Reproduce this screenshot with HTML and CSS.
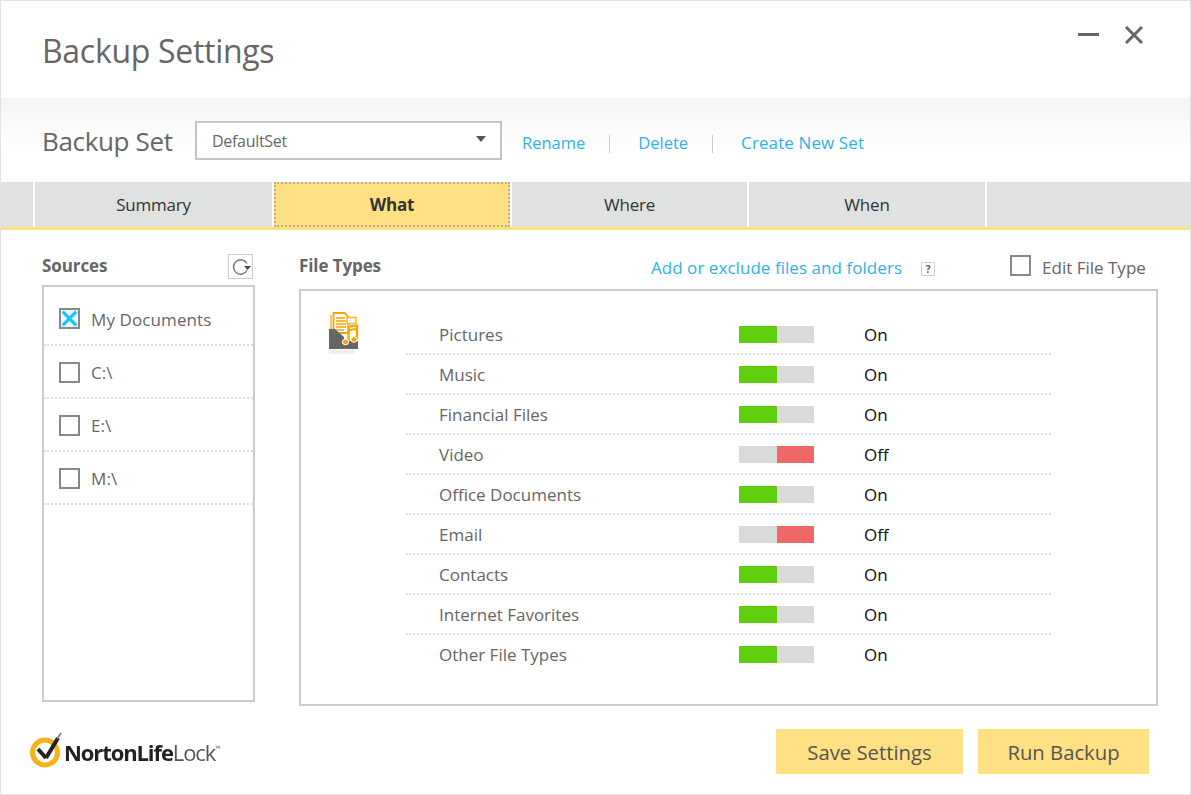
FILE: index.html
```html
<!DOCTYPE html>
<html lang="en">
<head>
  <meta charset="UTF-8" />
  <title>Backup Settings</title>
  <link rel="stylesheet" href="styles.css">
</head>
<body>

  <div class="window">

    <div class="title-bar">
      <h1 class="title">Backup Settings</h1>
      <div class="window-buttons">
        <svg class="win-icon" width="24" height="24" viewBox="0 0 24 24"><path d="M1 11.5h21" stroke="#666" stroke-width="3"/></svg>
        <svg class="win-icon" width="24" height="24" viewBox="0 0 24 24"><path d="M4 4l16 16M20 4L4 20" stroke="#666" stroke-width="3"/></svg>
      </div>
    </div>

    <div class="set-bar">
      <span class="set-label">Backup Set</span>
      <div class="set-select">
        <span>DefaultSet</span>
        <span class="select-arrow"></span>
      </div>
      <a class="link set-link" href="#">Rename</a>
      <span class="set-sep"></span>
      <a class="link set-link" href="#">Delete</a>
      <span class="set-sep"></span>
      <a class="link set-link set-link-new" href="#">Create New Set</a>
    </div>

    <div class="tabs">
      <div class="tab">Summary</div>
      <div class="tab tab-active">What</div>
      <div class="tab">Where</div>
      <div class="tab">When</div>
    </div>

    <div class="content">

      <div class="sources">
        <div class="sources-head">
          <span class="heading">Sources</span>
          <span class="refresh-btn">
            <svg width="22" height="22" viewBox="0 0 22 22"><path d="M17 14.500a7.200 7.200 0 1 1 0-7" fill="none" stroke="#777" stroke-width="1.500"/><path d="M14 10h7l-3.500 4z" fill="#444"/></svg>
          </span>
        </div>
        <div class="source-list">
          <div class="source-row"><span class="check check-on">
            <svg width="20" height="20" viewBox="0 0 20 20"><path d="M2 2l16 16M18 2L2 18" stroke="#1cc3f5" stroke-width="3.600"/></svg>
          </span>My Documents</div>
          <div class="source-row"><span class="check"></span>C:\</div>
          <div class="source-row"><span class="check"></span>E:\</div>
          <div class="source-row"><span class="check"></span>M:\</div>
        </div>
      </div>

      <div class="types">
        <div class="types-head">
          <span class="heading">File Types</span>
          <a class="link add-link" href="#">Add or exclude files and folders</a>
          <span class="help">?</span>
          <span class="check edit-check"></span>
          <span class="edit-label">Edit File Type</span>
        </div>
        <div class="types-box">
          <div class="type-icon">
            <svg width="30" height="44" viewBox="0 0 30 44">
              <path d="M2 3v18" stroke="#f9b233" stroke-width="1.500" fill="none"/>
              <path d="M4.500 1h11l4 4v16h-15z" fill="#fff" stroke="#f7a600" stroke-width="1.800"/>
              <path d="M7 6h9M7 9h10M7 12h10M7 15h10M7 18h8" stroke="#f7a600" stroke-width="1.300"/>
              <path d="M18 5.500h9v6h-9z" fill="#fff" stroke="#f9b233" stroke-width="1.500"/>
              <path d="M0 17h6l9 8v12H0z" fill="#666"/>
              <path d="M15 25h14v12H15z" fill="#666"/>
              <path d="M19 13h11v16H19z" fill="#fff"/>
              <path d="M15 25l4-2v8h-4z" fill="#fff"/>
              <path d="M19.500 29V14.500l8.500-1V27" fill="none" stroke="#f7a600" stroke-width="2.400"/>
              <path d="M20 18l8-1" stroke="#f7a600" stroke-width="2"/>
              <ellipse cx="16.500" cy="30" rx="3.200" ry="2.800" fill="#f7a600" stroke="#fff"/>
              <ellipse cx="25" cy="27.500" rx="3.200" ry="2.800" fill="#f7a600" stroke="#fff"/>
              <path d="M0 38h26v4H0z" fill="#eee"/>
            </svg>
          </div>
          <div class="type-list">
            <div class="type-row"><span class="type-name">Pictures</span><span class="switch"><i class="on"></i><i></i></span><span class="state">On</span></div>
            <div class="type-row"><span class="type-name">Music</span><span class="switch"><i class="on"></i><i></i></span><span class="state">On</span></div>
            <div class="type-row"><span class="type-name">Financial Files</span><span class="switch"><i class="on"></i><i></i></span><span class="state">On</span></div>
            <div class="type-row"><span class="type-name">Video</span><span class="switch"><i></i><i class="off"></i></span><span class="state">Off</span></div>
            <div class="type-row"><span class="type-name">Office Documents</span><span class="switch"><i class="on"></i><i></i></span><span class="state">On</span></div>
            <div class="type-row"><span class="type-name">Email</span><span class="switch"><i></i><i class="off"></i></span><span class="state">Off</span></div>
            <div class="type-row"><span class="type-name">Contacts</span><span class="switch"><i class="on"></i><i></i></span><span class="state">On</span></div>
            <div class="type-row"><span class="type-name">Internet Favorites</span><span class="switch"><i class="on"></i><i></i></span><span class="state">On</span></div>
            <div class="type-row type-last"><span class="type-name">Other File Types</span><span class="switch"><i class="on"></i><i></i></span><span class="state">On</span></div>
          </div>
        </div>
      </div>

    </div>

    <div class="footer">
      <div class="logo">
        <svg class="logo-mark" width="36" height="40" viewBox="0 0 36 40">
          <circle cx="16" cy="24.500" r="12.500" fill="none" stroke="#f5b21a" stroke-width="5"/>
          <path d="M9 21l8 9" fill="none" stroke="#222" stroke-width="4"/>
          <path d="M17 30L29 10" fill="none" stroke="#222" stroke-width="4"/>
          <path d="M28 11l4-6" fill="none" stroke="#777" stroke-width="1.500"/>
        </svg>
        <span class="logo-text"><b>NortonLife</b>Lock<sup>™</sup></span>
      </div>
      <div class="footer-buttons">
        <button class="btn btn-save">Save Settings</button>
        <button class="btn btn-run">Run Backup</button>
      </div>
    </div>

  </div>

</body>
</html>
```

FILE: styles.css
```css
html, body {
  margin: 0;
  padding: 0;
  background: #fff;
  font-family: "Open Sans", "Noto Sans", sans-serif;
}

.window {
  box-sizing: border-box;
  width: 1191px;
  height: 795px;
  border: 1px solid #e2e2e2;
  background: #fff;
  overflow: hidden;
}

.title-bar {
  height: 97px;
  display: flex;
  justify-content: space-between;
  padding: 0 44px 0 41px;
}
.title {
  margin: 30px 0 0;
  font-size: 32px;
  line-height: 40px;
  font-weight: 400;
  color: #666;
  letter-spacing: -0.3px;
}
.window-buttons {
  display: flex;
  gap: 21px;
  padding-top: 22px;
  height: 24px;
}

.set-bar {
  height: 84px;
  box-sizing: border-box;
  padding: 23px 0 0 41px;
  display: flex;
  align-items: flex-start;
  background: linear-gradient(to bottom, #f5f5f5, #fff 65%);
}
.set-label {
  font-size: 26px;
  line-height: 40px;
  width: 153px;
  color: #666;
  letter-spacing: -0.35px;
}
.set-select {
  box-sizing: border-box;
  width: 307px;
  height: 39px;
  border: 2px solid #c4c4c4;
  background: #fff;
  display: flex;
  align-items: center;
  justify-content: space-between;
  padding: 0 14px 0 15px;
  font-size: 16px;
  color: #666;
  letter-spacing: -0.3px;
}
.select-arrow {
  width: 0;
  height: 0;
  margin-bottom: 4px;
  border-left: 5px solid transparent;
  border-right: 5px solid transparent;
  border-top: 6px solid #555;
}
.link {
  color: #2fb2ea;
  text-decoration: none;
}
.set-link {
  margin-top: 2px;
  font-size: 16.500px;
  line-height: 40px;
}
.set-link-new {
  font-size: 17px;
  letter-spacing: 0.1px;
}
.set-bar .set-link:first-of-type {
  margin-left: 20px;
}
.set-sep {
  width: 1px;
  height: 18px;
  margin: 14px 28px 0 24px;
  background: #ccc;
}

.tabs {
  height: 45px;
  display: flex;
  gap: 2px;
  padding-left: 32px;
  background: #e0e2e1;
  border-bottom: 3px solid #ffe082;
}
.tabs::before,
.tab {
  box-shadow: -2px 0 0 #fff;
}
.tabs::before {
  content: "";
  width: 0;
}
.tabs::after {
  content: "";
  width: 2px;
  margin-left: -2px;
  background: #fff;
}
.tab {
  box-sizing: border-box;
  width: 236px;
  display: flex;
  align-items: center;
  justify-content: center;
  font-size: 17px;
  color: #333;
  letter-spacing: -0.2px;
}
.tab:first-child {
  width: 237px;
}
.tab:nth-child(3) {
  width: 235px;
}
.tab-active {
  background: #ffe082;
  border: 2px dotted #b9ae88;
  font-weight: 700;
}

.content {
  display: flex;
  padding: 23px 32px 0 41px;
  gap: 44px;
}
.heading {
  margin-top: 1px;
  font-size: 17px;
  font-weight: 700;
  color: #666;
  letter-spacing: -0.1px;
}
.sources {
  width: 213px;
}
.sources-head {
  height: 32px;
  display: flex;
  align-items: flex-start;
  justify-content: space-between;
  padding-right: 2px;
}
.refresh-btn {
  box-sizing: border-box;
  width: 25px;
  height: 25px;
  margin-top: 1px;
  border: 1px solid #ccc;
  display: flex;
  align-items: center;
  justify-content: center;
}
.source-list {
  box-sizing: border-box;
  height: 417px;
  border: 2px solid #ccc;
}
.source-row {
  box-sizing: border-box;
  height: 53px;
  display: flex;
  align-items: center;
  gap: 11px;
  padding: 2px 0 0 15px;
  border-bottom: 2px dotted #ddd;
  font-size: 17px;
  color: #666;
  letter-spacing: 0.1px;
}
.source-row:first-child {
  height: 59px;
  padding-top: 8px;
}
.check {
  box-sizing: border-box;
  width: 21px;
  height: 21px;
  border: 2px solid #888;
  display: inline-flex;
  align-items: center;
  justify-content: center;
  flex: none;
}
.check-on {
  margin-top: -3px;
  background: #e6f8fe;
}
.check svg {
  width: 17px;
  height: 17px;
}

.types {
  width: 859px;
}
.types-head {
  height: 36px;
  display: flex;
  align-items: flex-start;
}
.add-link {
  margin-left: 270px;
  margin-top: 2px;
  font-size: 17px;
  letter-spacing: 0.05px;
  line-height: 26px;
}
.help {
  box-sizing: border-box;
  width: 14px;
  height: 14px;
  margin: 9px 0 0 19px;
  border: 1px solid #ccc;
  font-size: 10px;
  line-height: 12px;
  text-align: center;
  color: #555;
  font-weight: 700;
}
.edit-check {
  margin: 2px 0 0 75px;
}
.edit-label {
  margin: 2px 0 0 11px;
  font-size: 17px;
  line-height: 26px;
  color: #666;
}
.types-box {
  box-sizing: border-box;
  height: 417px;
  border: 2px solid #ccc;
  display: flex;
  padding: 24px 0 0 28px;
}
.type-icon {
  width: 77px;
  height: 44px;
  margin-top: -3px;
}
.type-list {
  width: 645px;
}
.type-row {
  box-sizing: border-box;
  height: 40px;
  display: flex;
  align-items: center;
  padding-left: 33px;
  border-bottom: 2px dotted #ddd;
  font-size: 17px;
}
.type-last {
  border-bottom: 0;
  padding-bottom: 2px;
}
.type-name {
  width: 300px;
  color: #666;
}
.switch {
  width: 75px;
  height: 17px;
  display: flex;
  background: #d9d9d9;
}
.switch i {
  width: 37px;
  flex: 1;
}
.switch .on {
  background: #5fce0c;
}
.switch .off {
  background: #ef6767;
}
.state {
  margin-left: 50px;
  color: #111;
}

.footer {
  display: flex;
  justify-content: space-between;
  padding: 23px 41px 0 28px;
}
.logo {
  display: flex;
  align-items: center;
  height: 46px;
  filter: blur(0.4px);
}
.logo-mark {
  margin-top: -8px;
  flex: none;
}
.logo-text {
  font-size: 22px;
  letter-spacing: -1.1px;
  color: #555;
  margin-left: -1px;
}
.logo-text b {
  color: #222;
}
.logo-text sup {
  font-size: 7px;
  vertical-align: 10px;
  line-height: 0;
}
.footer-buttons {
  display: flex;
  gap: 15px;
}
.btn {
  height: 45px;
  border: 0;
  background: #ffe082;
  font-family: inherit;
  font-size: 20.300px;
  color: #555;
}
.btn-save {
  width: 187px;
}
.btn-run {
  width: 171px;
}
```
